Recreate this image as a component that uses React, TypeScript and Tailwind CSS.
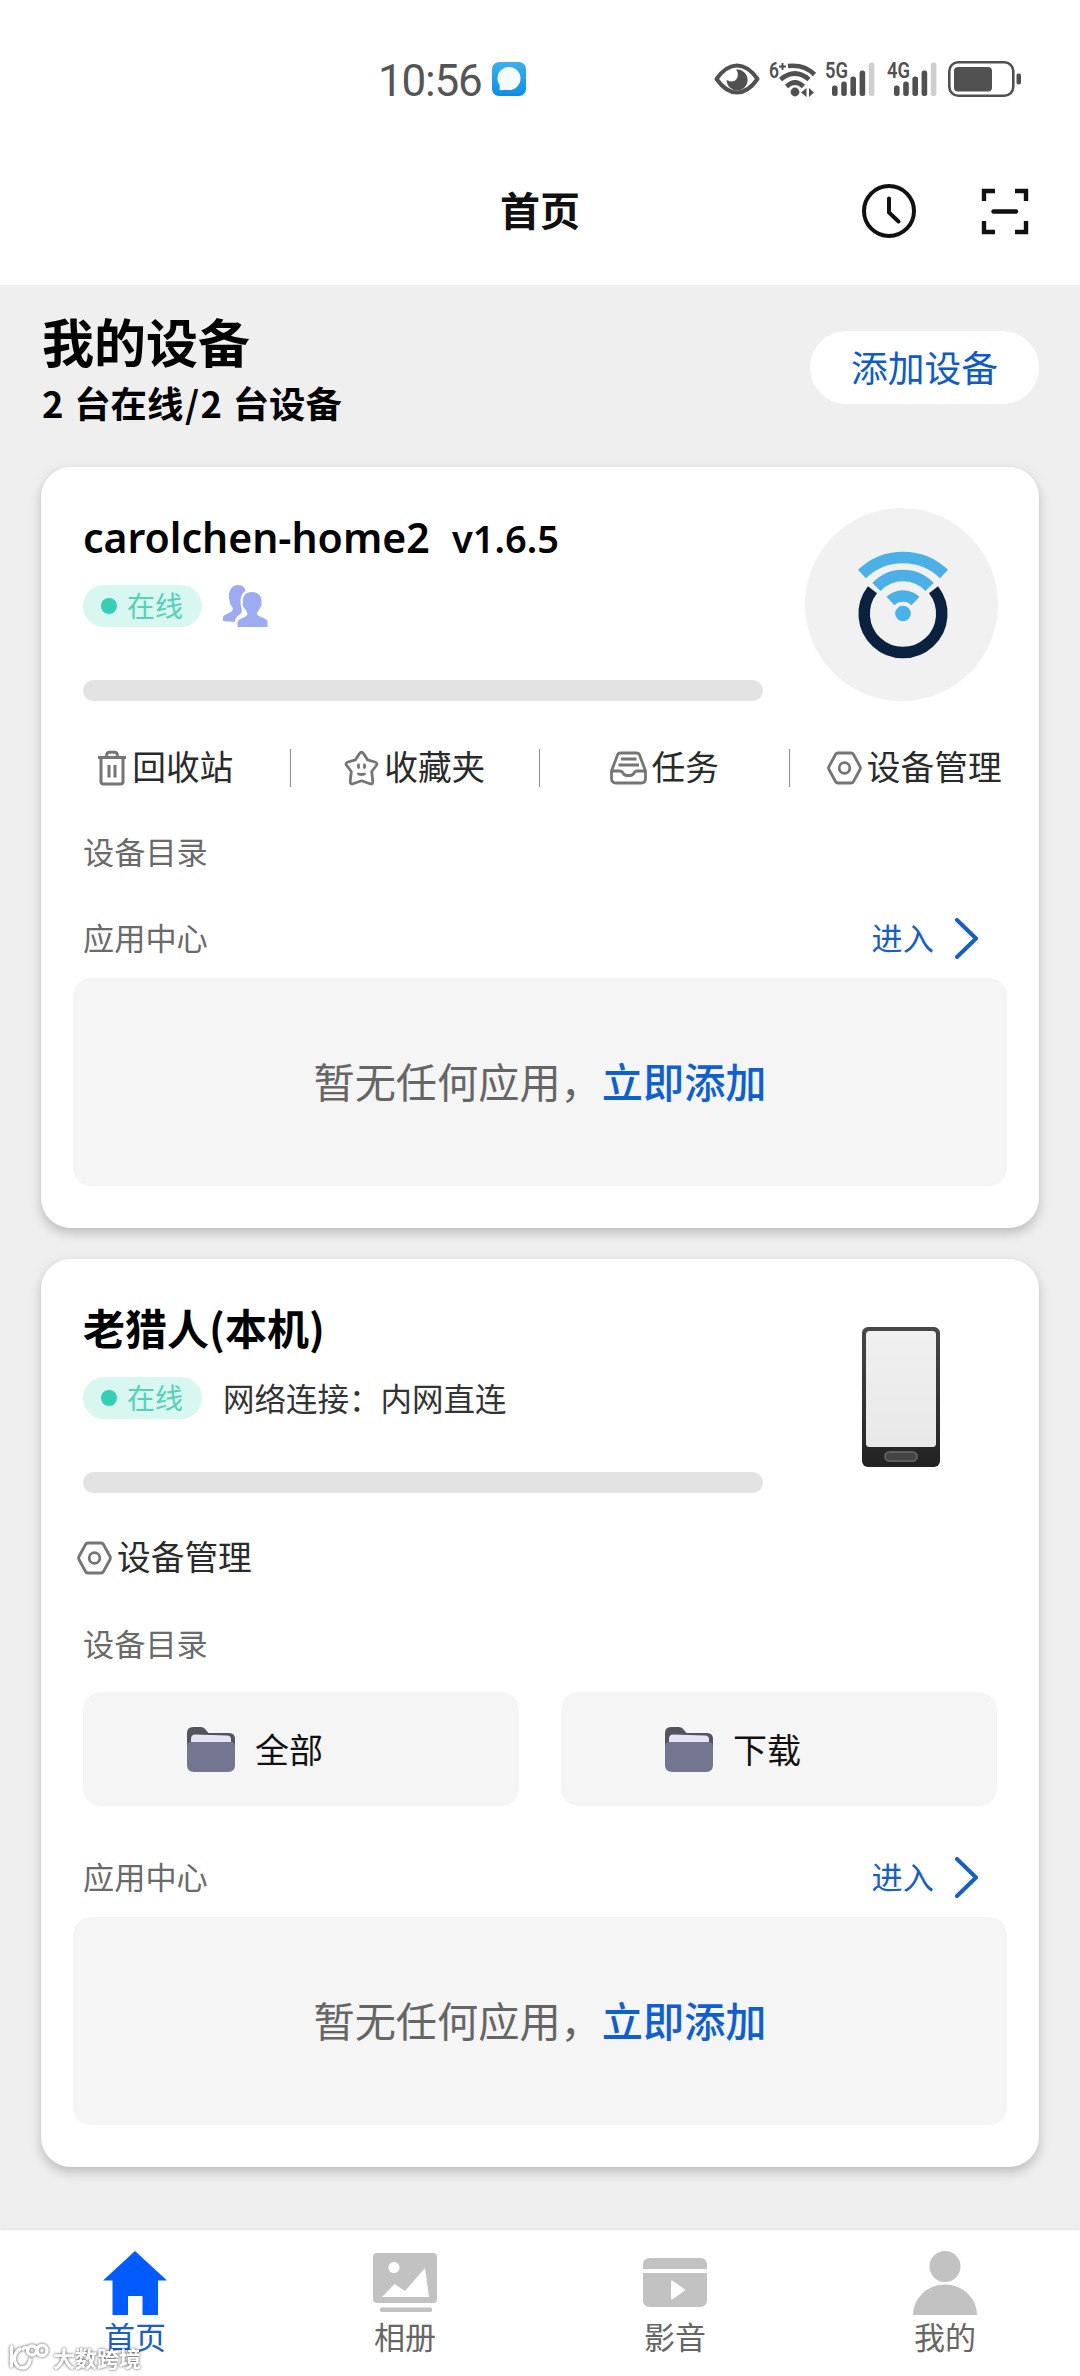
import { ReactNode } from 'react';

const BAR_TOPS = [23, 19, 14, 8, 0];

const SignalIcon = ({ label }: { label: string }) => (
  <svg className="overflow-visible" width="50" height="36" viewBox="0 0 50 36">
    <text x="0" y="17" fontSize="21.5" fontWeight="600" fill="#505050" fontFamily="Roboto, sans-serif" textLength="23" lengthAdjust="spacingAndGlyphs">
      {label}
    </text>
    {BAR_TOPS.map((top, i) => (
      <rect key={i} x={7 + i * 9.2} y={top + 1.5} width="5.6" height={33.5 - top} rx="2.5" fill={i === 4 ? '#cfcfcf' : '#505050'} />
    ))}
  </svg>
);

const StatusBar = () => (
  <div className="flex h-[136px] items-center justify-between pt-[22px] pl-[378px] pr-[57px]">
    <div className="flex items-center">
      <span className="w-[114px] pt-1 font-[Roboto,sans-serif] text-[44px] leading-[44px] tracking-[-1.2px] text-[#555]">10:56</span>
      <svg width="34" height="34" viewBox="0 0 34 34">
        <defs>
          <linearGradient id="msg" x1="0" y1="0" x2="0" y2="1">
            <stop offset="0" stopColor="#3cb0ec" />
            <stop offset="1" stopColor="#0b8ee6" />
          </linearGradient>
        </defs>
        <rect width="34" height="34" rx="7" fill="url(#msg)" />
        <circle cx="17" cy="16.5" r="11.5" fill="#f5fafd" />
        <path d="M8 20 L7.5 28 Q12 28.5 16 27 Z" fill="#f5fafd" />
      </svg>
    </div>
    <div className="flex items-center">
      <svg width="46" height="32" viewBox="0 0 46 32">
        <path d="M2.5 16 Q12 2.5 23 2.5 Q34 2.5 43.5 16 Q34 29.5 23 29.5 Q12 29.5 2.5 16 Z" fill="none" stroke="#505050" strokeWidth="4" strokeLinejoin="round" />
        <path d="M22 6.5 A10.5 10.5 0 1 1 12.6 17 Q19.5 20.5 22.5 16 Q25.5 11 22 6.5 Z" fill="#505050" />
      </svg>
      <svg className="ml-[9px] overflow-visible" width="48" height="36" viewBox="0 0 48 36">
        <text x="0" y="17" fontSize="21.5" fontWeight="600" fill="#505050" fontFamily="Roboto, sans-serif" textLength="10" lengthAdjust="spacingAndGlyphs">6</text>
        <path d="M10 5.5h7M13.5 2v7" stroke="#505050" strokeWidth="2" />
        <g fill="none" stroke="#505050" strokeWidth="4.6">
          <path d="M19 5 Q35 3 45.5 13.5" />
          <path d="M11.5 18.5 Q26 6.5 40 18.5" />
          <path d="M17.5 25.5 Q26 17.5 34.5 25.5" />
        </g>
        <circle cx="26" cy="31" r="4.4" fill="#505050" />
        <path d="M32 31.5 L37.5 27 V36 Z M45 31.5 L40 27 V36 Z" fill="#505050" />
      </svg>
      <div className="ml-[8px] flex gap-[12px]">
        <SignalIcon label="5G" />
        <SignalIcon label="4G" />
      </div>
      <svg className="ml-[11px]" width="75" height="36" viewBox="0 0 75 36">
        <rect x="1.3" y="1.3" width="64" height="33.4" rx="9" fill="none" stroke="#505050" strokeWidth="2.6" />
        <rect x="6" y="6" width="38" height="24.5" rx="4" fill="#505050" />
        <rect x="68.5" y="12.5" width="4.5" height="11" rx="2" fill="#505050" />
      </svg>
    </div>
  </div>
);

const Header = () => (
  <header className="grid h-[149px] grid-cols-[1fr_auto_1fr] items-center pr-[51px]">
    <div className="pl-[51px]" />
    <h1 className="pb-[3px] pl-[51px] text-[40px] leading-[60px] font-bold text-[#111]">首页</h1>
    <div className="flex items-center justify-end gap-[64px]">
      <svg width="56" height="56" viewBox="0 0 56 56" fill="none" stroke="#111" strokeWidth="4">
        <circle cx="28" cy="28" r="25" />
        <path d="M28 15.5 V29.5 L37.5 38.5" strokeLinecap="round" />
      </svg>
      <svg width="48" height="48" viewBox="0 0 48 48" fill="none" stroke="#111" strokeWidth="4.4">
        <path d="M3 14 V4 H14 M34 4 H45 V14 M3 34 V45 H14 M34 45 H45 V34" />
        <path d="M12.5 24.5 H35" strokeLinecap="round" />
      </svg>
    </div>
  </header>
);

const TrashIcon = () => (
  <svg width="30" height="36" viewBox="0 0 30 36" fill="none" stroke="#757575" strokeWidth="3">
    <path d="M1 7.5 H29 M9.5 7 Q9.5 2.3 12 2.3 H18 Q20.5 2.3 20.5 7 M4 8 V31.5 Q4 34 6.5 34 H23.5 Q26 34 26 31.5 V8" />
    <path d="M12 15 V27.5 M18 15 V27.5" />
  </svg>
);

const StarIcon = () => (
  <svg width="35" height="36" viewBox="0 0 35 36" fill="none" stroke="#757575" strokeWidth="2.8" strokeLinejoin="round" strokeLinecap="round">
    <path d="M15.5 3.5 Q17.5 1 19.5 3.5 L23.5 9.8 L31 12 Q34 13 32.3 15.5 L27.7 21.5 L28.8 31.5 Q28.8 34.5 26 33.8 L17.5 30.8 L9 33.8 Q6.2 34.5 6.2 31.5 L7.3 21.5 L2.7 15.5 Q1 13 4 12 L11.5 9.8 Z" />
    <path d="M14.5 15 V17.5 M20.5 15 V17.5 M14.5 24 Q17.5 25 20.5 24" />
  </svg>
);

const TaskIcon = () => (
  <svg width="37" height="34" viewBox="0 0 37 34" fill="none" stroke="#757575" strokeWidth="2.8" strokeLinejoin="round">
    <path d="M1.5 20 L7.5 4 Q8.2 2 10.5 2 H26.5 Q28.8 2 29.5 4 L35.5 20 V27.5 Q35.5 32 31 32 H6 Q1.5 32 1.5 27.5 Z" />
    <path d="M1.5 20 H10 Q12 20 13 22 Q14.5 24.5 17 24.5 H20 Q22.5 24.5 24 22 Q25 20 27 20 H35.5 M11 8 H26.5 M8.5 14 H29" />
  </svg>
);

const ManageIcon = () => (
  <svg width="35" height="34" viewBox="0 0 35 34" fill="none" stroke="#757575" strokeWidth="2.8" strokeLinejoin="round">
    <path d="M8.5 3.5 Q9.3 2 11 2 H24 Q25.7 2 26.5 3.5 L33 15.5 Q33.8 17 33 18.5 L26.5 30.5 Q25.7 32 24 32 H11 Q9.3 32 8.5 30.5 L2 18.5 Q1.2 17 2 15.5 Z" />
    <circle cx="17.5" cy="17" r="5.3" />
  </svg>
);

const UsersIcon = () => (
  <svg width="46" height="42" viewBox="0 0 46 42" fill="#9dabf3">
    <path d="M16 0 C21 0 23 3 23.5 6 C18.5 9 18 15 19 21 C20 26 20.5 28 17 30 C14.5 31.5 13.5 34 12.5 37 L1 36 V32 C2 29 8 28.5 10 26 C11.5 24 11 22.5 9 20.5 C7.5 18 8 16 7 13.5 C6 6 10 0 16 0 Z" />
    <path d="M30 7 C36.5 7 40 11 39.5 18 C40 20.5 38.5 22 37.5 24 C36 26.5 35 27 35 29.5 C37 32.5 45 33 45.5 36 V42 H15.5 V37 C17 33 24 32.5 25.5 29.5 C25.5 27 24 26.5 23 24 C21.5 22 20 20.5 20.8 18 C20.5 11 23.5 7 30 7 Z" />
  </svg>
);

const RouterLogo = () => (
  <div className="-mr-px flex size-[193px] items-center justify-center rounded-full bg-[#f1f1f1] pl-[2px]">
    <svg width="100" height="110" viewBox="0 0 100 110" fill="none">
      <path d="M19.5 39.8 A38.8 38.8 0 1 0 80.5 39.8" stroke="#0a2240" strokeWidth="11.5" />
      <g stroke="#4bb0e6" strokeWidth="11.5">
        <path d="M9 24 A59 59 0 0 1 91 24" />
        <path d="M23.5 37 A36.5 36.5 0 0 1 76.5 37" />
        <path d="M37.5 51 A18 18 0 0 1 62.5 51" />
      </g>
      <circle cx="50" cy="63.5" r="7.8" fill="#4bb0e6" />
    </svg>
  </div>
);

const PhoneImage = () => (
  <svg className="mt-[27px] mr-[57px]" width="78" height="140" viewBox="0 0 78 140">
    <defs>
      <linearGradient id="body" x1="0" y1="0" x2="0" y2="1">
        <stop offset="0" stopColor="#484848" />
        <stop offset="1" stopColor="#222" />
      </linearGradient>
      <linearGradient id="screen" x1="0" y1="0" x2="0" y2="1">
        <stop offset="0" stopColor="#f0f0f0" />
        <stop offset="1" stopColor="#e8e8e8" />
      </linearGradient>
    </defs>
    <rect width="78" height="140" rx="6" fill="url(#body)" />
    <rect x="4" y="4" width="70" height="116" rx="3.5" fill="url(#screen)" />
    <rect x="23" y="125" width="32" height="9" rx="4.5" fill="#444" stroke="#5e5e5e" strokeWidth="2" />
  </svg>
);

const FolderIcon = () => (
  <svg width="48" height="45" viewBox="0 0 48 45">
    <path d="M0 6 Q0 0 6 0 H14 Q17 0 19 3 L21.5 6 H42 Q48 6 48 12 V30 H0 Z" fill="#54545f" />
    <path d="M4 12 Q4 7.5 8 7.5 L40 8.5 Q44 8.5 44 12 V24 H4 Z" fill="#e4e4f2" />
    <path d="M0 19 Q0 15 4 15 H44 Q48 15 48 19 V38 Q48 45 41 45 H7 Q0 45 0 38 Z" fill="#747691" />
  </svg>
);

const OnlineBadge = () => (
  <div className="flex h-[42px] w-[119px] items-center rounded-full bg-[#d8f7f1] pl-[18px]">
    <span className="size-[16px] rounded-full bg-[#36cfb6]" />
    <span className="ml-[10px] pb-[2px] text-[28px] leading-[40px] text-[#56d0b6]">在线</span>
  </div>
);

const Action = ({ icon, label }: { icon: ReactNode; label: string }) => (
  <div className="flex items-center gap-[5px] text-[33.7px] leading-[34px] text-[#2a2a2a]">
    {icon}
    <span className="pb-[4px]">{label}</span>
  </div>
);

const AppCenter = () => (
  <>
    <div className="flex h-[40px] items-center justify-between pr-[59px] pl-[42px] text-[31.2px]">
      <span className="pb-[3px] text-[#6a6a6a]">应用中心</span>
      <div className="flex items-center gap-[20px] text-[#1560c4]">
        <span className="pb-[3px]">进入</span>
        <svg width="26" height="42" viewBox="0 0 26 42" fill="none" stroke="#1560c4" strokeWidth="4" strokeLinecap="round" strokeLinejoin="round">
          <path d="M3 2 L22 20.5 L3 39" />
        </svg>
      </div>
    </div>
    <div className="mx-[32px] mt-[19px] flex h-[208px] items-center justify-center rounded-[18px] bg-[#f5f5f5] pb-[2px] text-[41.2px]">
      <span className="text-[#666]">暂无任何应用，</span>
      <span className="font-medium text-[#0f60cf]">立即添加</span>
    </div>
  </>
);

interface DeviceCardProps {
  title: ReactNode;
  extra: ReactNode;
  image: ReactNode;
  children: ReactNode;
}

const DeviceCard = ({ title, extra, image, children }: DeviceCardProps) => (
  <section className="rounded-[30px] bg-white pb-[42px] shadow-[0_5px_12px_rgba(0,0,0,0.22)]">
    <div className="flex items-start justify-between px-[42px] pt-[41px]">
      <div className="w-[680px] pt-[5px]">
        <h3 className="flex h-[50px] items-center font-bold text-black">{title}</h3>
        <div className="mt-[22px] flex h-[42px] items-center">
          <OnlineBadge />
          {extra}
        </div>
        <div className="mt-[53px] h-[21px] rounded-full bg-[#e3e3e3]" />
      </div>
      {image}
    </div>
    {children}
  </section>
);

const TABS = [
  {
    label: '首页',
    icon: <path d="M32 0 L64 29.5 H55 V64 H39.5 V45 H25 V64 H9.5 V29.5 H0 Z" fill="#005cff" />,
  },
  {
    label: '相册',
    icon: (
      <>
        <rect y="2" width="64" height="50" rx="4" fill="#c2c2c2" />
        <rect x="7" y="56.5" width="52" height="4.6" rx="1.5" fill="#c2c2c2" />
        <circle cx="21" cy="16.5" r="5.5" fill="#fff" />
        <path d="M9 46 L21.5 33 L32 40 L52 17 L56 46 Z" fill="#fff" />
      </>
    ),
  },
  {
    label: '影音',
    icon: (
      <>
        <path d="M0 18 V14 Q0 7 7 7 H57 Q64 7 64 14 V18 Z M0 22 H64 V49 Q64 56 57 56 H7 Q0 56 0 49 Z" fill="#c2c2c2" />
        <path d="M29 30.5 L41 39 L29 47.5 Z" fill="#fff" stroke="#fff" strokeWidth="2" strokeLinejoin="round" />
      </>
    ),
  },
  {
    label: '我的',
    icon: (
      <>
        <circle cx="32" cy="15.5" r="15.5" fill="#c2c2c2" />
        <path d="M0 64 A32 30.5 0 0 1 64 64 Z" fill="#c2c2c2" />
      </>
    ),
  },
];

const TabBar = () => (
  <nav className="grid h-[146px] grid-cols-4 bg-white pt-[21px] shadow-[0_-1px_3px_rgba(0,0,0,0.06)]">
    {TABS.map((tab, i) => (
      <div key={tab.label} className="flex flex-col items-center">
        <svg width="64" height="64" viewBox="0 0 64 64">{tab.icon}</svg>
        <span className={`mt-px text-[31px] leading-[40px] ${i === 0 ? 'text-[#1a60c0]' : 'text-[#666]'}`}>{tab.label}</span>
      </div>
    ))}
  </nav>
);

const Watermark = () => (
  <div className="absolute bottom-[5px] left-[8px] flex items-center gap-[4px] drop-shadow-[0_0_1.5px_rgba(0,0,0,0.7)]">
    <svg width="41" height="28" viewBox="0 0 41 28" fill="none" stroke="#fff" strokeWidth="3.4" strokeLinecap="round">
      <path d="M3.5 4 V23 M12 6 Q6 10 6.5 17 Q8 25 15 25 Q21 24 22 17" />
      <circle cx="24" cy="7.5" r="4.5" />
      <circle cx="34" cy="7.5" r="5" />
      <path d="M15 6 Q18 3 20 6" />
    </svg>
    <span className="text-[22px] leading-[28px] font-bold text-white">大数跨境</span>
  </div>
);

export default function App() {
  return (
    <div className="relative flex h-[2376px] w-[1080px] flex-col overflow-hidden bg-white font-['Noto_Sans_CJK_SC',sans-serif]">
      <StatusBar />
      <Header />
      <main className="flex-1 bg-[#efefef] px-[41px]">
        <div className="flex h-[182px] items-start justify-between">
          <div className="pt-[25px] pl-px font-bold text-black">
            <h2 className="text-[52px] leading-[62px]">我的设备</h2>
            <p className="text-[36.4px] leading-[60px] [word-spacing:2.5px]">
              2 台在线<span className="mx-[1.5px]">/</span>2 台设备
            </p>
          </div>
          <button className="mt-[46px] h-[73px] w-[229px] rounded-full bg-white pb-[2px] text-[36.8px] leading-[71px] text-[#0f5cc4]">添加设备</button>
        </div>

        <div className="flex flex-col gap-[31px]">
          <DeviceCard
            title={
              <div className="flex items-baseline font-['Noto_Sans',sans-serif] font-semibold">
                <span className="w-[369px] text-[41px]">carolchen-home2</span>
                <span className="text-[38px]">v1.6.5</span>
              </div>
            }
            extra={<div className="ml-[20px]"><UsersIcon /></div>}
            image={<RouterLogo />}
          >
            <div className="mt-[48px] grid h-[34px] grid-cols-4 divide-x divide-[#8a8a8a]">
              <div className="flex items-center justify-center"><Action icon={<TrashIcon />} label="回收站" /></div>
              <div className="flex items-center justify-center"><Action icon={<StarIcon />} label="收藏夹" /></div>
              <div className="flex items-center justify-center"><Action icon={<TaskIcon />} label="任务" /></div>
              <div className="flex items-center justify-center"><Action icon={<ManageIcon />} label="设备管理" /></div>
            </div>
            <p className="mt-[48px] mb-[48px] pl-[42px] text-[31.2px] leading-[40px] text-[#6a6a6a]">设备目录</p>
            <AppCenter />
          </DeviceCard>

          <DeviceCard
            title={<span className="pb-[7px] text-[42px]">老猎人(本机)</span>}
            extra={<span className="ml-[21px] pb-px text-[31.5px] text-[#333]">网络连接：内网直连</span>}
            image={<PhoneImage />}
          >
            <div className="mt-[48px] flex h-[34px] items-center pl-[36px]">
              <Action icon={<ManageIcon />} label="设备管理" />
            </div>
            <p className="mt-[48px] pl-[42px] text-[31.2px] leading-[40px] text-[#6a6a6a]">设备目录</p>
            <div className="mt-[29px] mb-[52px] grid grid-cols-2 gap-[42px] px-[42px]">
              {['全部', '下载'].map((name) => (
                <div key={name} className="flex h-[114px] items-center gap-[20px] rounded-[18px] bg-[#f5f5f5] pl-[104px] text-[34px] text-[#111]">
                  <FolderIcon />
                  <span className="pb-[2px]">{name}</span>
                </div>
              ))}
            </div>
            <AppCenter />
          </DeviceCard>
        </div>
      </main>
      <TabBar />
      <Watermark />
    </div>
  );
}
